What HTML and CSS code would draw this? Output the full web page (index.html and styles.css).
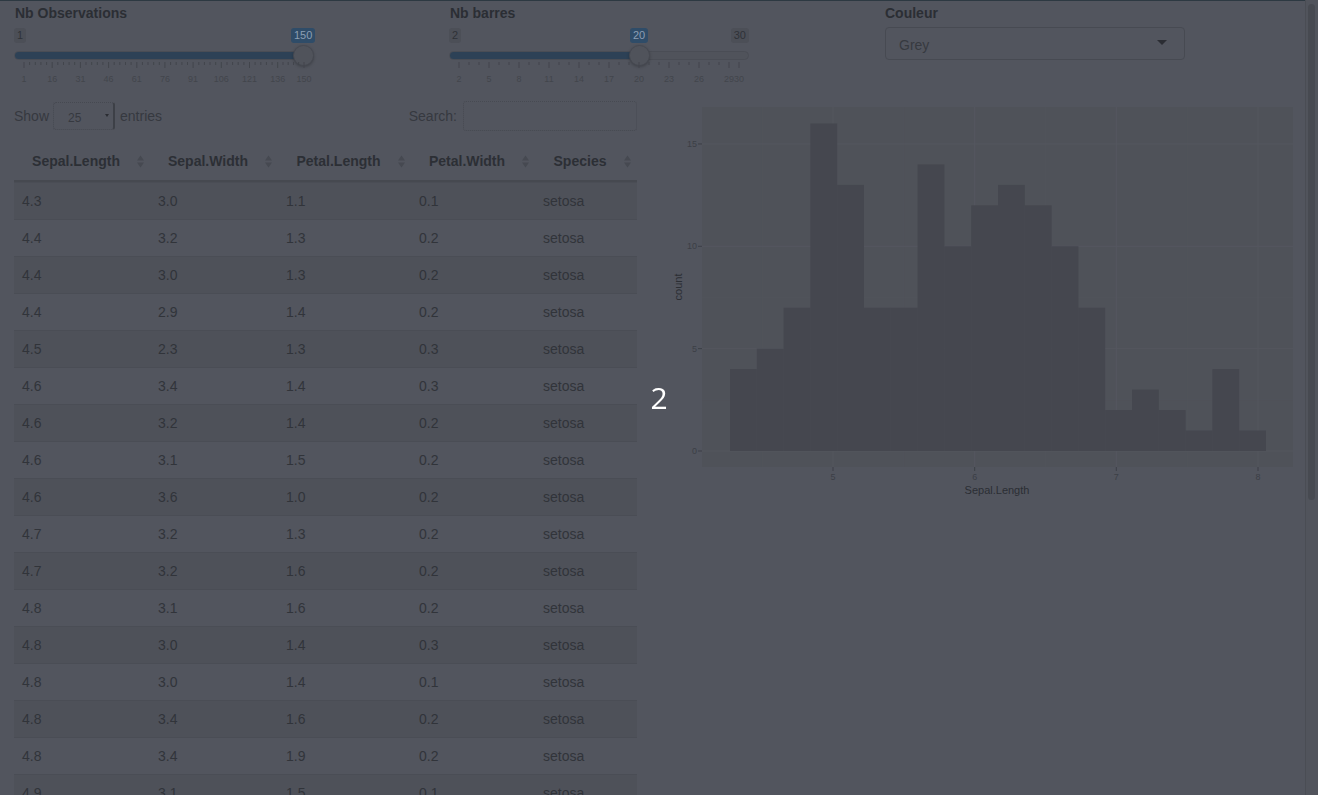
FILE: index.html
```html
<!DOCTYPE html>
<html lang="fr">
<head>
<meta charset="utf-8">
<title>Iris</title>
<link rel="stylesheet" href="styles.css">
</head>
<body>
<div class="page">
  <div class="controls">
    <div class="ctl">
      <label class="ctl-label">Nb Observations</label>
      <div class="slider">
        <div class="irs-line"><div class="irs-bar" style="width:289px"></div></div>
        <span class="irs-lbl irs-min">1</span>
        <span class="irs-lbl irs-single" style="left:277px">150</span>
        <span class="irs-handle" style="left:278.5px"></span>
        <svg class="irs-grid" width="300" height="25" viewBox="0 0 300 25">
          <path class="pol" d="M10 2v6M38.2 2v6M66.4 2v6M94.6 2v6M122.8 2v6M150.9 2v6M179.1 2v6M207.3 2v6M235.5 2v6M263.7 2v6M290 2v6"/>
          <path class="pol" d="M15.6 2v3M21.3 2v3M26.9 2v3M32.6 2v3M43.8 2v3M49.5 2v3M55.1 2v3M60.7 2v3M72 2v3M77.7 2v3M83.3 2v3M88.9 2v3M100.2 2v3M105.8 2v3M111.5 2v3M117.1 2v3M128.4 2v3M134 2v3M139.7 2v3M145.3 2v3M156.6 2v3M162.2 2v3M167.9 2v3M173.5 2v3M184.8 2v3M190.4 2v3M196 2v3M201.7 2v3M213 2v3M218.6 2v3M224.2 2v3M229.9 2v3M241.1 2v3M246.8 2v3M252.4 2v3M258.1 2v3M269 2v3M274.2 2v3M279.5 2v3M284.7 2v3"/>
          <g class="gt">
            <text x="10" y="22">1</text><text x="38.2" y="22">16</text><text x="66.4" y="22">31</text><text x="94.6" y="22">46</text><text x="122.8" y="22">61</text><text x="150.9" y="22">76</text><text x="179.1" y="22">91</text><text x="207.3" y="22">106</text><text x="235.5" y="22">121</text><text x="263.7" y="22">136</text><text x="290" y="22">150</text>
          </g>
        </svg>
      </div>
    </div>
    <div class="ctl">
      <label class="ctl-label">Nb barres</label>
      <div class="slider">
        <div class="irs-line"><div class="irs-bar" style="width:190px"></div></div>
        <span class="irs-lbl irs-min">2</span>
        <span class="irs-lbl irs-max">30</span>
        <span class="irs-lbl irs-single" style="left:181px">20</span>
        <span class="irs-handle" style="left:179.5px"></span>
        <svg class="irs-grid" width="300" height="25" viewBox="0 0 300 25">
          <path class="pol" d="M10 2v6M40 2v6M70 2v6M100 2v6M130 2v6M160 2v6M190 2v6M220 2v6M250 2v6M280 2v6M290 2v6"/>
          <path class="pol" d="M20 2v3M30 2v3M50 2v3M60 2v3M80 2v3M90 2v3M110 2v3M120 2v3M140 2v3M150 2v3M170 2v3M180 2v3M200 2v3M210 2v3M230 2v3M240 2v3M260 2v3M270 2v3"/>
          <g class="gt">
            <text x="10" y="22">2</text><text x="40" y="22">5</text><text x="70" y="22">8</text><text x="100" y="22">11</text><text x="130" y="22">14</text><text x="160" y="22">17</text><text x="190" y="22">20</text><text x="220" y="22">23</text><text x="250" y="22">26</text><text x="280" y="22">29</text><text x="290" y="22">30</text>
          </g>
        </svg>
      </div>
    </div>
    <div class="ctl">
      <label class="ctl-label">Couleur</label>
      <div class="sel"><span>Grey</span><span class="caret"></span></div>
    </div>
  </div>

  <div class="main">
    <div class="left">
      <div class="dt-top">
        <div class="dt-length">Show <span class="len-select"><span>25</span><span class="mini-caret"></span></span> entries</div>
        <div class="dt-search">Search: <span class="search-input"></span></div>
      </div>
      <table class="dt">
        <colgroup><col class="c1"><col class="c2"><col class="c3"><col class="c4"><col class="c5"></colgroup>
        <thead>
          <tr>
            <th>Sepal.Length<svg class="sort" width="7" height="13" viewBox="0 0 7 13"><path d="M0 5.5L3.5 0.5 7 5.5zM0 7.5h7L3.5 12.5z"/></svg></th>
            <th>Sepal.Width<svg class="sort" width="7" height="13" viewBox="0 0 7 13"><path d="M0 5.5L3.5 0.5 7 5.5zM0 7.5h7L3.5 12.5z"/></svg></th>
            <th>Petal.Length<svg class="sort" width="7" height="13" viewBox="0 0 7 13"><path d="M0 5.5L3.5 0.5 7 5.5zM0 7.5h7L3.5 12.5z"/></svg></th>
            <th>Petal.Width<svg class="sort" width="7" height="13" viewBox="0 0 7 13"><path d="M0 5.5L3.5 0.5 7 5.5zM0 7.5h7L3.5 12.5z"/></svg></th>
            <th>Species<svg class="sort" width="7" height="13" viewBox="0 0 7 13"><path d="M0 5.5L3.5 0.5 7 5.5zM0 7.5h7L3.5 12.5z"/></svg></th>
          </tr>
        </thead>
        <tbody>
          <tr><td>4.3</td><td>3.0</td><td>1.1</td><td>0.1</td><td>setosa</td></tr>
          <tr><td>4.4</td><td>3.2</td><td>1.3</td><td>0.2</td><td>setosa</td></tr>
          <tr><td>4.4</td><td>3.0</td><td>1.3</td><td>0.2</td><td>setosa</td></tr>
          <tr><td>4.4</td><td>2.9</td><td>1.4</td><td>0.2</td><td>setosa</td></tr>
          <tr><td>4.5</td><td>2.3</td><td>1.3</td><td>0.3</td><td>setosa</td></tr>
          <tr><td>4.6</td><td>3.4</td><td>1.4</td><td>0.3</td><td>setosa</td></tr>
          <tr><td>4.6</td><td>3.2</td><td>1.4</td><td>0.2</td><td>setosa</td></tr>
          <tr><td>4.6</td><td>3.1</td><td>1.5</td><td>0.2</td><td>setosa</td></tr>
          <tr><td>4.6</td><td>3.6</td><td>1.0</td><td>0.2</td><td>setosa</td></tr>
          <tr><td>4.7</td><td>3.2</td><td>1.3</td><td>0.2</td><td>setosa</td></tr>
          <tr><td>4.7</td><td>3.2</td><td>1.6</td><td>0.2</td><td>setosa</td></tr>
          <tr><td>4.8</td><td>3.1</td><td>1.6</td><td>0.2</td><td>setosa</td></tr>
          <tr><td>4.8</td><td>3.0</td><td>1.4</td><td>0.3</td><td>setosa</td></tr>
          <tr><td>4.8</td><td>3.0</td><td>1.4</td><td>0.1</td><td>setosa</td></tr>
          <tr><td>4.8</td><td>3.4</td><td>1.6</td><td>0.2</td><td>setosa</td></tr>
          <tr><td>4.8</td><td>3.4</td><td>1.9</td><td>0.2</td><td>setosa</td></tr>
          <tr><td>4.9</td><td>3.1</td><td>1.5</td><td>0.1</td><td>setosa</td></tr>
          <tr><td>4.9</td><td>3.0</td><td>1.4</td><td>0.2</td><td>setosa</td></tr>
          <tr><td>4.9</td><td>3.1</td><td>1.5</td><td>0.2</td><td>setosa</td></tr>
        </tbody>
      </table>
    </div>
    <div class="right">
      <svg class="plot" width="632" height="400" viewBox="0 0 632 400">
        <rect class="panel" x="35" y="6" width="591" height="360"/>
        <path class="grid-minor" d="M35 298.8H626M35 196.5H626M35 94.1H626M95.2 6V366M236.8 6V366M378.5 6V366M520.2 6V366"/>
        <path class="grid-major" d="M35 350H626M35 247.65H626M35 145.3H626M35 42.95H626M166 6V366M307.7 6V366M449.3 6V366M591 6V366"/>
        <g class="bars">
          <rect x="63" y="268.12" width="26.8" height="81.88"/>
          <rect x="89.8" y="247.65" width="26.8" height="102.35"/>
          <rect x="116.6" y="206.71" width="26.8" height="143.29"/>
          <rect x="143.4" y="22.48" width="26.8" height="327.52"/>
          <rect x="170.2" y="83.89" width="26.8" height="266.11"/>
          <rect x="197" y="206.71" width="26.8" height="143.29"/>
          <rect x="223.8" y="206.71" width="26.8" height="143.29"/>
          <rect x="250.6" y="63.42" width="26.8" height="286.58"/>
          <rect x="277.4" y="145.3" width="26.8" height="204.7"/>
          <rect x="304.2" y="104.36" width="26.8" height="245.64"/>
          <rect x="331" y="83.89" width="26.8" height="266.11"/>
          <rect x="357.8" y="104.36" width="26.8" height="245.64"/>
          <rect x="384.6" y="145.3" width="26.8" height="204.7"/>
          <rect x="411.4" y="206.71" width="26.8" height="143.29"/>
          <rect x="438.2" y="309.06" width="26.8" height="40.94"/>
          <rect x="465" y="288.59" width="26.8" height="61.41"/>
          <rect x="491.8" y="309.06" width="26.8" height="40.94"/>
          <rect x="518.6" y="329.53" width="26.8" height="20.47"/>
          <rect x="545.4" y="268.12" width="26.8" height="81.88"/>
          <rect x="572.2" y="329.53" width="26.8" height="20.47"/>
        </g>
        <path class="ticks" d="M31 350h4M31 247.65h4M31 145.3h4M31 42.95h4M166 366v4M307.7 366v4M449.3 366v4M591 366v4"/>
        <g class="ytl">
          <text x="30" y="353">0</text>
          <text x="30" y="250.6">5</text>
          <text x="30" y="148.3">10</text>
          <text x="30" y="46">15</text>
        </g>
        <g class="xtl">
          <text x="166" y="379">5</text>
          <text x="307.7" y="379">6</text>
          <text x="449.3" y="379">7</text>
          <text x="591" y="379">8</text>
        </g>
        <text class="axis-title" x="330" y="393">Sepal.Length</text>
        <text class="axis-title" transform="translate(15,186) rotate(-90)">count</text>
      </svg>
    </div>
  </div>
</div>
<div class="busy">2</div>
<div class="scrollbar"><div class="thumb"></div></div>
</body>
</html>
```

FILE: styles.css
```css
html, body {
  margin: 0;
  padding: 0;
  height: 100%;
  overflow: hidden;
}
body {
  background: #52555e;
  box-shadow: inset 0 1px 0 #2d3942;
  font-family: "Liberation Sans", Arial, Helvetica, sans-serif;
  font-size: 14px;
  line-height: 20px;
  color: #30333a;
}
.page {
  width: 1305px;
}

/* top controls */
.controls {
  display: grid;
  grid-template-columns: 435px 435px 435px;
  padding-top: 3px;
}
.ctl {
  padding: 0 15px;
}
.ctl-label {
  display: block;
  font-weight: bold;
  color: #2b2e34;
  margin-bottom: 2px;
}
.ctl .sel {
  margin-top: 4px;
}

/* slider */
.slider {
  position: relative;
  width: 300px;
  height: 60px;
  margin-left: -1px;
}
.irs-line {
  position: absolute;
  left: 0;
  top: 26px;
  width: 300px;
  height: 9px;
  box-sizing: border-box;
  border: 1px solid #4a4d55;
  border-radius: 5px;
  background: #50535b;
  overflow: hidden;
}
.irs-bar {
  height: 100%;
  background: #2d4156;
}
.irs-lbl {
  position: absolute;
  top: 3px;
  font-size: 11px;
  line-height: 13px;
  padding: 1px 3px;
  border-radius: 3px;
  background: #4c4f57;
  color: #2f3238;
}
.irs-min { left: 0; }
.irs-max { right: 0; }
.irs-single {
  background: #2f4c68;
  color: #8c9eb3;
}
.irs-handle {
  position: absolute;
  top: 20px;
  width: 21px;
  height: 21px;
  box-sizing: border-box;
  border-radius: 50%;
  background: #50535b;
  border: 1px solid #464951;
  box-shadow: 0 1px 3px rgba(0, 0, 0, 0.25);
}
.irs-grid {
  position: absolute;
  left: 0;
  top: 35px;
  overflow: visible;
}
.irs-grid .pol {
  stroke: #42454c;
  stroke-width: 1;
  fill: none;
}
.irs-grid .gt text {
  font-family: "Liberation Sans", Arial, sans-serif;
  font-size: 9px;
  fill: #42454c;
  text-anchor: middle;
}

/* select */
.sel {
  width: 300px;
  height: 33px;
  box-sizing: border-box;
  border: 1px solid #474a52;
  border-radius: 4px;
  padding: 7px 12px 5px 13px;
  display: flex;
  align-items: center;
  justify-content: space-between;
  color: #373a40;
}
.caret {
  width: 0;
  height: 0;
  border-left: 5px solid transparent;
  border-right: 5px solid transparent;
  border-top: 5px solid #2b2d33;
  margin-right: 5px;
  margin-top: -4px;
}

/* main */
.main {
  display: grid;
  grid-template-columns: 652px 653px;
  margin-top: 16px;
}
.left {
  padding: 0 15px 0 14px;
}
.right {
  padding: 0 6px 0 15px;
}
.dt-top {
  display: flex;
  justify-content: space-between;
  align-items: center;
  height: 30px;
  color: #363940;
}
.dt-length, .dt-search {
  display: flex;
  align-items: center;
}
.len-select {
  width: 62px;
  height: 28px;
  box-sizing: border-box;
  margin: 0 5px 0 4px;
  border: 1px dotted #464951;
  border-right: 2px solid #3d4047;
  border-radius: 3px;
  display: flex;
  align-items: center;
  justify-content: space-between;
  padding: 3px 4px 0 14px;
  font-size: 12px;
}
.mini-caret {
  width: 0;
  height: 0;
  border-left: 2.5px solid transparent;
  border-right: 2.5px solid transparent;
  border-top: 3px solid #2b2d33;
  margin-top: -4px;
}
.search-input {
  display: block;
  width: 174px;
  height: 30px;
  box-sizing: border-box;
  margin-left: 6px;
  border: 1px dotted #474a52;
  border-radius: 3px;
}

/* table */
.dt {
  margin-top: 10px;
  width: 623px;
  table-layout: fixed;
  border-collapse: separate;
  border-spacing: 0;
}
.dt col.c1 { width: 136px; }
.dt col.c2 { width: 128px; }
.dt col.c3 { width: 133px; }
.dt col.c4 { width: 124px; }
.dt col.c5 { width: 102px; }
.dt th {
  position: relative;
  padding: 10px 22px 9px 10px;
  font-weight: bold;
  text-align: center;
  color: #2c2f35;
  border-bottom: 2px solid #464950;
  white-space: nowrap;
}
.dt th .sort {
  position: absolute;
  right: 6px;
  top: 14px;
  fill: #464951;
}
.dt td {
  padding: 8px;
  border-top: 1px solid #4a4d55;
  color: #31343a;
  white-space: nowrap;
}
.dt tbody tr:nth-child(odd) td {
  background: #4e5159;
}

/* plot */
.plot {
  display: block;
  overflow: visible;
}
.plot .panel { fill: #4f5259; }
.plot .grid-major { stroke: #54575f; stroke-width: 1; fill: none; }
.plot .grid-minor { stroke: #52555d; stroke-width: 0.5; fill: none; }
.plot .bars rect { fill: #45474f; }
.plot .ticks { stroke: #3c3f46; stroke-width: 1; fill: none; }
.plot text {
  font-family: "Liberation Sans", Arial, sans-serif;
}
.plot .ytl text {
  font-size: 9px;
  fill: #3c3f46;
  text-anchor: end;
}
.plot .xtl text {
  font-size: 9px;
  fill: #3c3f46;
  text-anchor: middle;
}
.plot .axis-title {
  font-size: 11px;
  fill: #2b2e34;
  text-anchor: middle;
}

/* busy indicator */
.busy {
  position: fixed;
  left: 50%;
  top: 50%;
  transform: translate(-50%, -50%);
  font-family: "Open Sans", "DejaVu Sans", sans-serif;
  font-size: 30px;
  line-height: 36px;
  color: #ffffff;
}

/* scrollbar */
.scrollbar {
  position: fixed;
  top: 0;
  right: 0;
  width: 13px;
  height: 100%;
  background: #51545c;
  border-left: 1px solid #4a4d54;
  box-sizing: border-box;
}
.scrollbar .thumb {
  margin: 4px 0 0 2px;
  width: 7px;
  height: 496px;
  border-radius: 4px;
  background: #474a51;
}
```
